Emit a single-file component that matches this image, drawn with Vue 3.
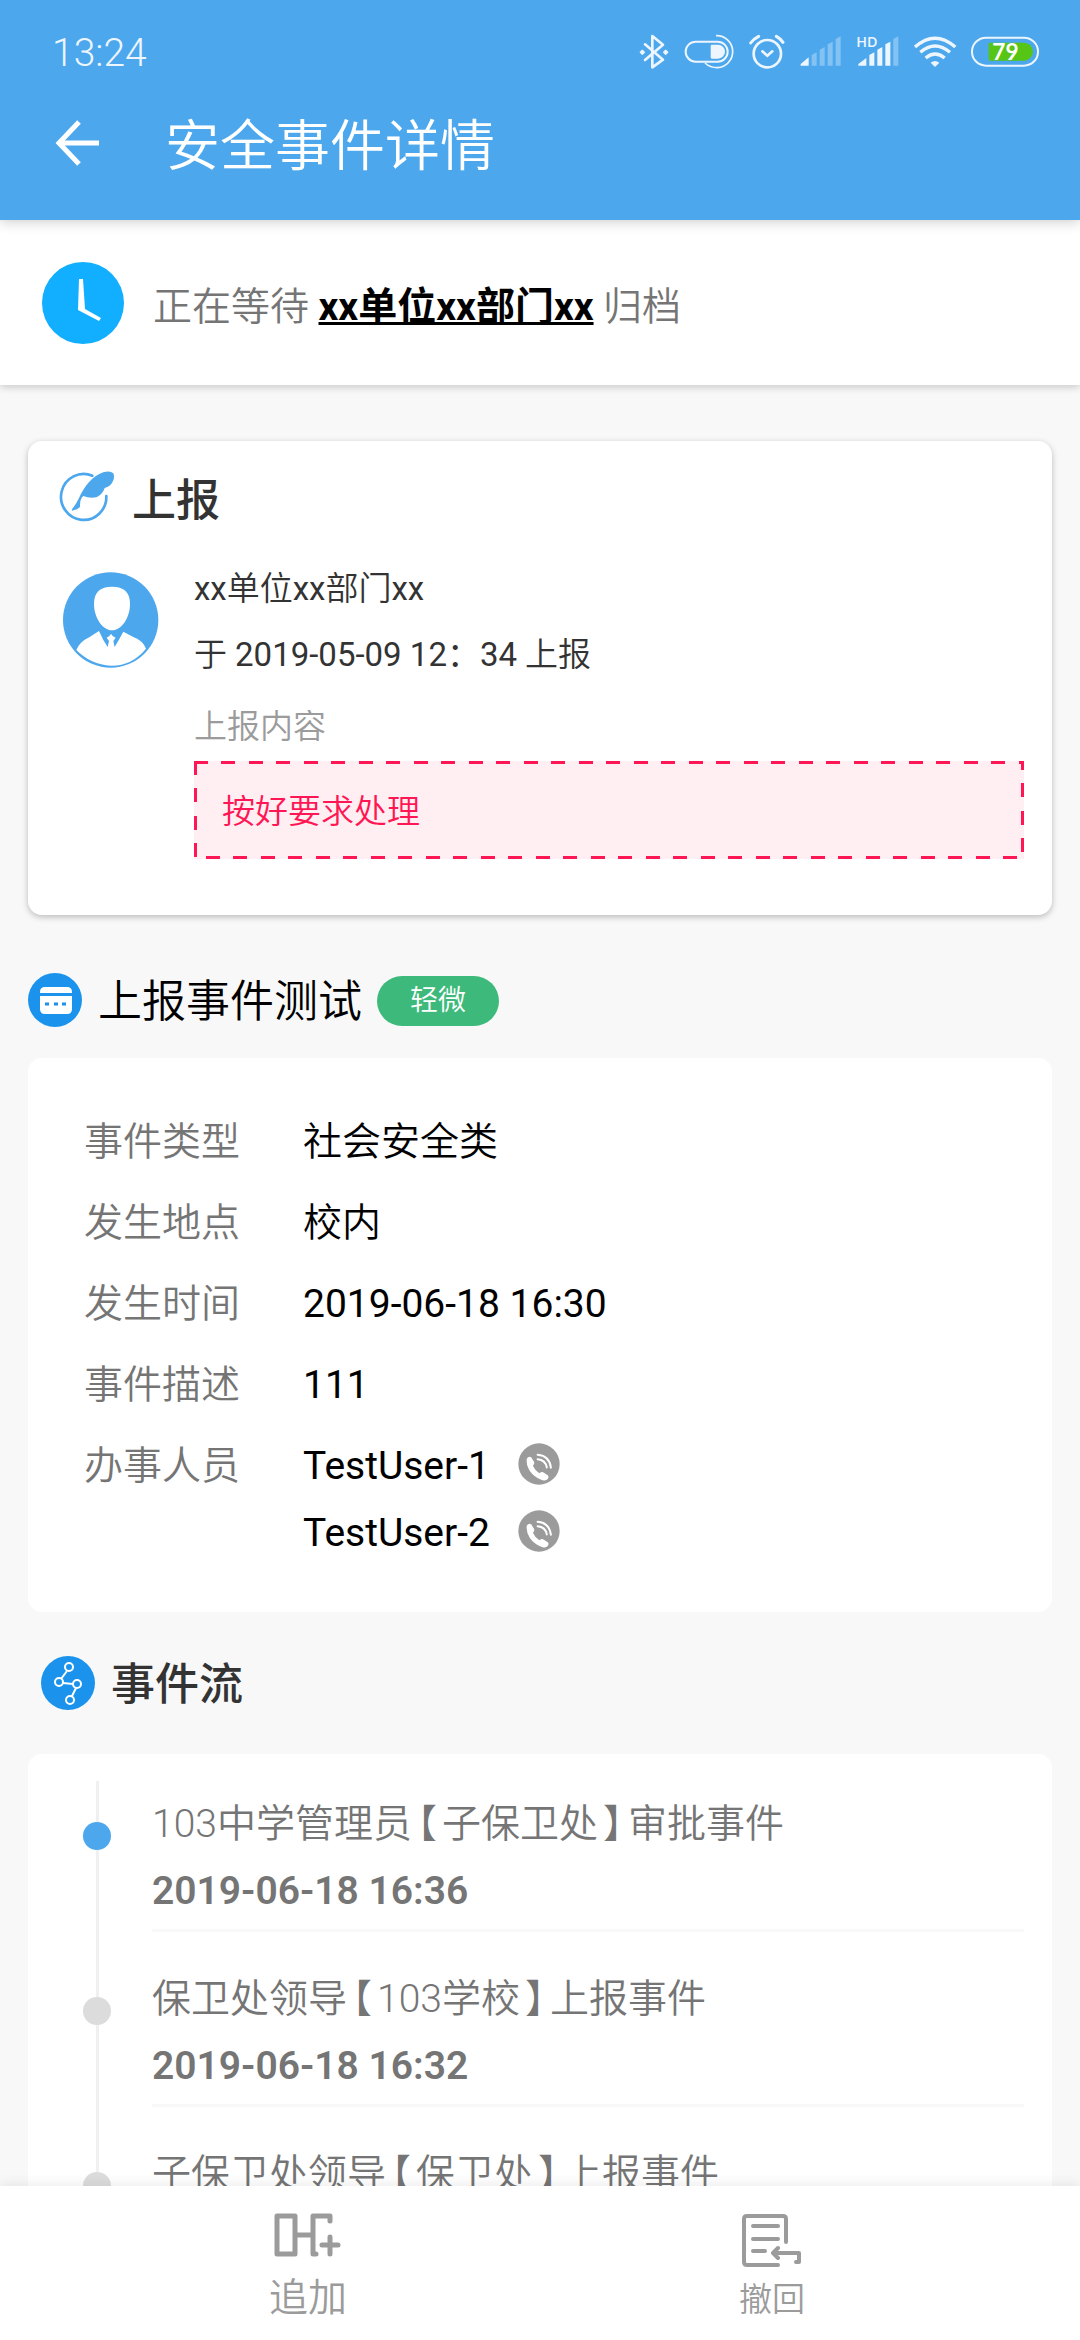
<script setup>
const details = [
  { label: '事件类型', value: '社会安全类' },
  { label: '发生地点', value: '校内' },
  { label: '发生时间', value: '2019-06-18 16:30', latin: true },
  { label: '事件描述', value: '111', latin: true },
]

const handlers = ['TestUser-1', 'TestUser-2']

const flow = [
  { who: '103中学管理员', unit: '子保卫处', action: '审批事件', time: '2019-06-18 16:36', active: true },
  { who: '保卫处领导', unit: '103学校', action: '上报事件', time: '2019-06-18 16:32', active: false },
  { who: '子保卫处领导', unit: '保卫处', action: '上报事件', time: '2019-06-18 16:30', active: false },
]
</script>

<template>
  <div class="screen">
    <header class="header">
      <div class="status">
        <span class="clock">13:24</span>
        <div class="status-icons">
          <svg width="30" height="36" viewBox="114 100 90 108" fill="none" stroke="#edf6fe" stroke-width="8" stroke-linejoin="round" stroke-linecap="round">
            <path d="M132 131l54 46-32 23v-94l32 26-54 46" />
            <path d="M124 149l6 6-6 6-6-6zM194 149l6 6-6 6-6-6z" fill="#edf6fe" stroke-width="4" />
          </svg>
          <svg width="50" height="36" viewBox="250 100 150 108" fill="none" stroke="#edf6fe">
            <rect x="255" y="123" width="126" height="60" rx="30" stroke-width="6" />
            <path d="M334 132h18a21 21 0 0 1 0 42h-18a4 4 0 0 1-4-4v-34a4 4 0 0 1 4-4z" fill="#edf6fe" stroke="none" />
            <path d="M346 105a48 48 0 0 1 4 96q-22 0-37-14" stroke-width="5" />
          </svg>
          <svg width="36" height="36" viewBox="446 100 108 108" fill="none" stroke="#edf6fe" stroke-width="8" stroke-linecap="round">
            <circle cx="501" cy="159" r="41" />
            <path d="M486 152l15 13 15-13" />
            <path d="M451 127q8-12 24-20M528 107q13 7 20 18" stroke-width="9" />
          </svg>
          <svg width="42" height="36" viewBox="598 100 126 108" fill="#84c2f3">
            <path d="M600 190l24-20v25h-24z" fill="#edf6fe" />
            <path d="M633 163l15-8v40h-15zM657 147l15-8v56h-15zM681 131l15-8v72h-15zM705 115l15-8v88h-15z" />
          </svg>
          <svg width="42" height="36" viewBox="764 100 126 108" fill="#edf6fe">
            <path d="M768 190l24-18v23h-24zM801 163l15-8v40h-15zM825 147l15-8v56h-15zM849 131l15-8v72h-15z" />
            <path d="M873 115l15-8v88h-15z" fill="#84c2f3" />
            <text class="hd" x="762" y="138">HD</text>
          </svg>
          <svg width="42" height="36" viewBox="936 100 126 108" fill="none" stroke="#edf6fe" stroke-width="10">
            <path d="M939 139q60-53 121 0M955 155q44-38 89 0M971 172q28-24 57 0" />
            <path d="M986 186q13-10 26 0l-13 13z" fill="#edf6fe" stroke="none" />
          </svg>
          <svg width="68" height="36" viewBox="1110 100 204 108">
            <rect x="1113" y="111" width="198" height="84" rx="42" fill="none" stroke="#edf6fe" stroke-width="6" />
            <path d="M1168 126h101a27 27 0 0 1 0 54h-101a5 5 0 0 1-5-5v-44a5 5 0 0 1 5-5z" fill="#56c516" />
            <text class="charge" x="1174" y="179">79</text>
          </svg>
        </div>
      </div>
      <div class="title-bar">
        <button class="back" type="button" aria-label="返回">
          <svg width="44" height="46" viewBox="0 0 44 46" fill="none" stroke="#fff" stroke-width="5">
            <path d="M44 23H4M24 2L4 23l20 21" />
          </svg>
        </button>
        <h1>安全事件详情</h1>
      </div>
    </header>

    <section class="waiting">
      <svg width="82" height="82" viewBox="0 0 82 82">
        <circle cx="41" cy="41" r="41" fill="#12aeff" />
        <path d="M37 17h4l2 30 16 9-2 3-21-11z" fill="#fff" />
      </svg>
      <p>正在等待 <a href="#">xx单位xx部门xx</a> 归档</p>
    </section>

    <main class="content">
      <section class="card report">
        <div class="report-head">
          <svg width="54" height="50" viewBox="30 31 162 150">
            <path d="M127 45A68 69 0 1 0 169 106" fill="none" stroke="#4da7ed" stroke-width="8" stroke-linecap="round" />
            <path d="M66 147q1-4 5-8 9-12 16-27C103 78 126 46 160 35q20-6 30 3 5 12-2 25-7 14-24 19-6 19-23 27-20 6-41-3-10 8-10 28v5l-9 7q-9 2-15 4-1-1 0-3z" fill="#4da7ed" />
          </svg>
          <h2>上报</h2>
        </div>
        <div class="report-body">
          <svg class="avatar" width="96" height="96" viewBox="39 336 288 288">
            <circle cx="182" cy="480" r="143" fill="#4da7ed" />
            <path d="M132 432q0-52 54-52t54 52c0 40-25 79-54 79s-54-39-54-79z" fill="#fff" />
            <path d="M79 570q10-25 40-39l28-18q12 28 26 48l4-18-7-10q9-3 13-12 4 9 14 12l-7 10 4 18q12-20 26-46l30 16q28 10 38 35-43 52-105 51-61-3-104-47z" fill="#fff" />
          </svg>
          <div class="report-text">
            <p><span class="latin">xx</span>单位<span class="latin">xx</span>部门<span class="latin">xx</span></p>
            <p>于 <time class="latin">2019-05-09 12：34</time> 上报</p>
            <p class="caption">上报内容</p>
            <div class="quote">
              <svg class="quote-frame" aria-hidden="true">
                <rect width="100%" height="100%" fill="none" stroke="#ff1654" stroke-width="6" stroke-dasharray="14 13 14 14" />
              </svg>
              按好要求处理
            </div>
          </div>
        </div>
      </section>

      <div class="section-head">
        <svg width="55" height="55" viewBox="0 0 55 55">
          <circle cx="27" cy="27" r="27" fill="#1b93ed" />
          <path d="M12 20v-1q0-5 5-5h22q5 0 5 5v1zM12 23h32v13q0 5-5 5H17q-5 0-5-5z" fill="#fff" />
          <path d="M17 31h4M26 31h4M34 31h4" stroke="#1b93ed" stroke-width="3" />
        </svg>
        <h2 class="plain">上报事件测试</h2>
        <span class="badge">轻微</span>
      </div>

      <section class="card details">
        <dl>
          <div v-for="row in details" :key="row.label" class="row">
            <dt>{{ row.label }}</dt>
            <dd :class="{ latin: row.latin }">{{ row.value }}</dd>
          </div>
          <div class="row">
            <dt>办事人员</dt>
            <dd class="latin">
              <div v-for="name in handlers" :key="name" class="handler">
                <span>{{ name }}</span>
                <button type="button" class="call" :aria-label="'呼叫 ' + name">
                  <svg width="42" height="42" viewBox="38 38 124 124">
                    <circle cx="100" cy="100" r="61" fill="#9b9b9b" />
                    <path d="M64 84q6-8 13-4l9 15q1 6-4 10 6 14 19 22 6-5 11-3l14 9q5 6-2 13-8 5-19 0-20-8-32-25-12-20-9-37z" fill="#fff" />
                    <path d="M96 73q35 3 39 38M96 86q23 2 27 24" fill="none" stroke="#fff" stroke-width="6" stroke-linecap="round" />
                  </svg>
                </button>
              </div>
            </dd>
          </div>
        </dl>
      </section>

      <div class="section-head flow-head">
        <svg width="55" height="55" viewBox="0 0 55 55">
          <circle cx="27" cy="27" r="27" fill="#1b93ed" />
          <g fill="none" stroke="#fff" stroke-width="2">
            <circle cx="28" cy="11" r="4" />
            <circle cx="18" cy="26" r="4" />
            <circle cx="36" cy="28" r="4" />
            <circle cx="29" cy="44" r="4" />
            <path d="M26 15l-6 8M22 27l10 1M35 32l-4 8" />
          </g>
        </svg>
        <h2>事件流</h2>
      </div>

      <section class="card">
        <ol class="flow">
          <li v-for="item in flow" :key="item.who">
            <span class="rail"><span class="dot" :class="{ active: item.active }"></span></span>
            <div class="entry">
              <p>{{ item.who }}<span class="unit">【<span class="unit-name">{{ item.unit }}</span>】</span>{{ item.action }}</p>
              <time>{{ item.time }}</time>
            </div>
          </li>
        </ol>
      </section>
    </main>

    <nav class="actions">
      <button type="button">
        <svg width="66" height="54" viewBox="275 0 66 54" fill="none" stroke="#9b9b9b" stroke-width="5" stroke-linecap="round" stroke-linejoin="round">
          <path d="M277 3h18v38h-18zM295 22h18M330 8V3h-17v38h3M322 32h16M330 24v17" />
        </svg>
        <span>追加</span>
      </button>
      <button type="button">
        <svg width="60" height="54" viewBox="0 0 60 54" fill="none" stroke="#9b9b9b" stroke-width="4" stroke-linecap="round" stroke-linejoin="round">
          <path d="M44 29V6q0-3-3-3H5Q2 3 2 6v43q0 3 3 3h31M11 13h25M11 26h25M11 38h12M36 35l-5 5 5 5M31 40h26v9h-3" />
        </svg>
        <span class="small">撤回</span>
      </button>
    </nav>
  </div>
</template>

<style>
body {
  background: #f8f8f8;
}
</style>

<style scoped>
.screen {
  display: flex;
  flex-direction: column;
  height: 100vh;
  background: #f8f8f8;
  color: #333;
  font-family: Roboto, "Noto Sans CJK SC", sans-serif;
  font-size: 33px;
  font-weight: 350;
}

h1,
h2,
p,
dl,
dd,
ol {
  margin: 0;
  padding: 0;
}

svg {
  display: block;
  flex: none;
  overflow: visible;
}

button {
  padding: 0;
  border: 0;
  background: none;
  color: inherit;
  font: inherit;
}

.latin {
  font-weight: 400;
}

.header {
  position: relative;
  z-index: 2;
  flex: none;
  background: #4da7ed;
  box-shadow: 0 2px 12px rgba(0, 0, 0, 0.2);
  color: #fff;
}

.status {
  display: flex;
  align-items: center;
  justify-content: space-between;
  height: 104px;
  padding: 0 41px 0 52px;
  color: #edf6fe;
}

.clock {
  padding-top: 2px;
  font-size: 39px;
  line-height: 40px;
}

.status-icons {
  display: flex;
  gap: 15px;
}

.hd {
  fill: #edf6fe;
  font-family: "Open Sans", sans-serif;
  font-size: 43px;
  font-weight: 600;
}

.charge {
  fill: #fff;
  font-family: Lato, sans-serif;
  font-size: 68px;
  font-weight: 700;
}

.title-bar {
  display: flex;
  align-items: center;
  gap: 66px;
  height: 78px;
  padding: 0 55px 38px;
}

h1 {
  padding-top: 6px;
  font-size: 55px;
  font-weight: 350;
  line-height: 72px;
}

.waiting {
  position: relative;
  z-index: 1;
  display: flex;
  align-items: center;
  gap: 29px;
  flex: none;
  height: 165px;
  padding: 0 42px;
  background: #fff;
  box-shadow: 0 2px 8px rgba(0, 0, 0, 0.2);
  color: #757575;
  font-size: 39px;
}

.waiting a {
  color: #000;
  font-weight: 700;
  text-decoration-thickness: 3px;
}

.content {
  flex: 1;
  min-height: 0;
  overflow-y: auto;
  scrollbar-width: none;
  padding: 56px 28px 0;
}

.card {
  border-radius: 14px;
  background: #fff;
}

.report {
  padding: 30px 28px 56px 32px;
  box-shadow: 0 2px 6px rgba(0, 0, 0, 0.25);
}

.report-head {
  display: flex;
  align-items: center;
  gap: 18px;
  height: 50px;
}

h2 {
  padding-top: 4px;
  font-size: 44px;
  font-weight: 500;
  line-height: 51px;
}

.report-head h2 {
  padding-top: 10px;
}

.report-body {
  display: flex;
  gap: 35px;
  padding-top: 35px;
}

.avatar {
  margin: 16px 0 0 3px;
}

.report-text {
  flex: 1;
  line-height: 66px;
}

.report-text .caption {
  padding-top: 5px;
  color: #9b9b9b;
  line-height: 68px;
}

.quote {
  position: relative;
  padding: 4px 28px 0;
  background: #ffeff2;
  color: #ff1654;
  line-height: 94px;
}

.quote-frame {
  position: absolute;
  inset: 0;
  width: 100%;
  height: 100%;
  overflow: hidden;
}

.section-head {
  display: flex;
  align-items: center;
  gap: 15px;
  padding: 58px 0 30px;
}

.plain {
  color: #000;
  font-weight: 350;
}

.badge {
  padding: 0 33px;
  border-radius: 25px;
  background: #3dba7b;
  color: #fff;
  font-size: 28px;
  line-height: 50px;
}

.details {
  padding: 44px 56px 45px;
}

.row {
  display: flex;
  font-size: 39px;
  line-height: 81px;
}

.row dt {
  width: 219px;
  color: #757575;
}

.row dd {
  color: #000;
}

.handler {
  display: flex;
  align-items: center;
  gap: 28px;
  height: 67px;
}

.handler:first-child {
  margin-top: 7px;
}

.call {
  padding-bottom: 6px;
}

.flow-head {
  padding: 44px 13px 43px;
}

.flow {
  padding: 27px 28px 0 55px;
  list-style: none;
}

.flow li {
  display: flex;
  gap: 41px;
  height: 175px;
  color: #757575;
  font-size: 39px;
}

.rail {
  display: flex;
  justify-content: center;
  width: 28px;
  background: linear-gradient(#f0f0f0, #f0f0f0) center / 3px 100% no-repeat;
}

.dot {
  width: 28px;
  height: 28px;
  margin-top: 41px;
  border-radius: 50%;
  background: #dcdcdc;
}

.dot.active {
  background: #4da7ed;
}

.entry {
  flex: 1;
  height: 148px;
  border-bottom: 3px solid #f8f8f8;
  line-height: 67px;
}

.entry p {
  padding-top: 10px;
}

.unit {
  margin: 0 -14px;
}

.unit-name {
  margin: 0 5px;
}

.entry time {
  display: block;
  font-weight: 600;
}

.actions {
  position: relative;
  z-index: 1;
  display: grid;
  grid-template-columns: 1fr 1fr;
  flex: none;
  height: 154px;
  padding: 0 76px;
  background: #fff;
  box-shadow: 0 -2px 12px rgba(0, 0, 0, 0.08);
}

.actions button {
  display: flex;
  flex-direction: column;
  align-items: center;
  padding-top: 27px;
  color: #9b9b9b;
  font-size: 39px;
  line-height: 62px;
}

.actions .small {
  font-size: 33px;
  line-height: 66px;
}
</style>
